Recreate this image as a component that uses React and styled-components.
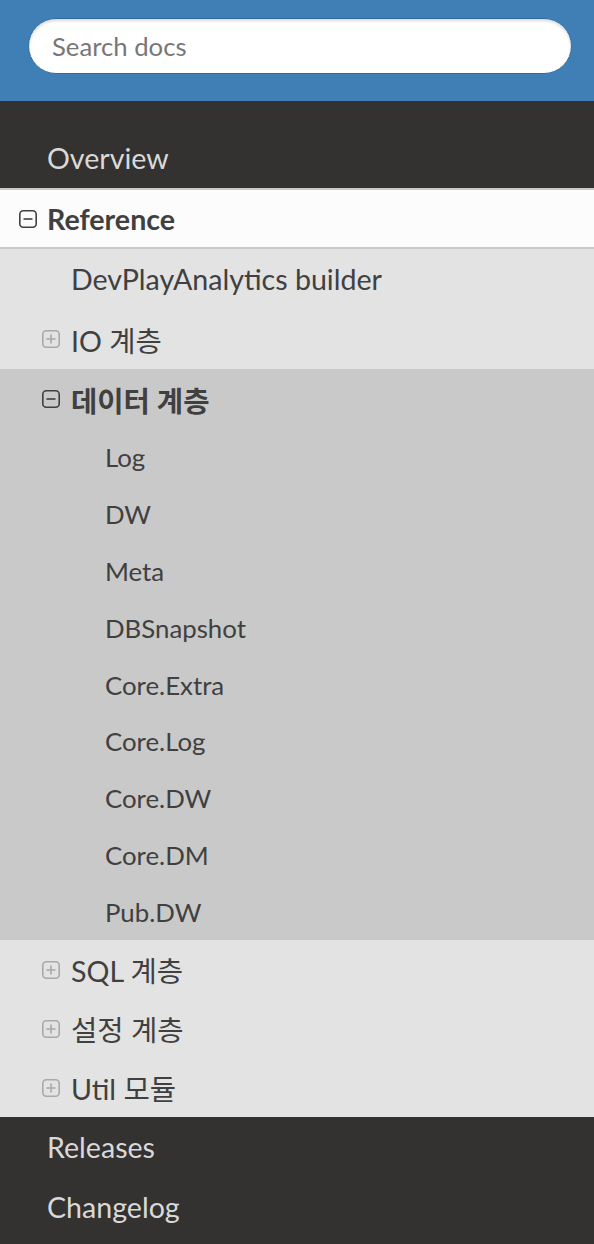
import React from 'react';
import styled, { createGlobalStyle } from 'styled-components';

const GlobalStyle = createGlobalStyle`
    body {
        margin: 0;
        font-family: Lato, "Noto Sans CJK KR", "Noto Sans", sans-serif;
        background: #343131;
    }
`

const Sidebar = styled.nav`
    width: 594px;
    min-height: 1244px;
    background: #343131;
`

const SearchArea = styled.div`
    background: #407eb6;
    padding: 18px 22px 27px 28px;
`

const SearchInput = styled.input`
    display: block;
    box-sizing: border-box;
    width: 100%;
    height: 56px;
    border-radius: 28px;
    border: 1px solid #2f6c9f;
    background: #fff;
    box-shadow: inset 0 2px 3px rgba(0, 0, 0, 0.15);
    padding: 0 23px;
    font-family: inherit;
    font-size: 25.7px;
    color: #404040;
    outline: none;
    &::placeholder {
        color: #777;
    }
`

const Menu = styled.div`
    padding-top: 27px;
`

const DarkLink = styled.a`
    display: block;
    height: 60px;
    line-height: 60px;
    padding-left: 47px;
    font-size: 28.6px;
    color: #d9d9d9;
    text-decoration: none;
`

const CurrentTop = styled.div`
    background: #fcfcfc;
    border-top: 2px solid #c9c9c9;
    border-bottom: 2px solid #c9c9c9;
`

const Row = styled.a`
    display: flex;
    align-items: center;
    gap: ${p => p.$gap || 11}px;
    height: ${p => p.$height || 60}px;
    padding-left: ${p => p.$indent}px;
    font-size: ${p => p.$size || 28.6}px;
    font-weight: ${p => (p.$bold ? 700 : 400)};
    color: #404040;
    text-decoration: none;
`

const Group = styled.div`
    background: ${p => p.$bg};
`

const Toggle = ({ open }) => {
    const c = open ? '#404040' : '#a9a9a9';
    return (
        <svg width="18" height="18" viewBox="0 0 18 18">
            <rect x="0.8" y="0.8" width="16.4" height="16.4" rx="3.5" fill="none" stroke={c} strokeWidth="1.6" />
            <line x1="4.5" y1="9" x2="13.5" y2="9" stroke={c} strokeWidth="1.6" />
            {!open && <line x1="9" y1="4.5" x2="9" y2="13.5" stroke={c} strokeWidth="1.6" />}
        </svg>
    );
}

const dataPages = ['Log', 'DW', 'Meta', 'DBSnapshot', 'Core.Extra', 'Core.Log', 'Core.DW', 'Core.DM', 'Pub.DW'];

export default function App() {
    return (
        <Sidebar>
            <GlobalStyle />
            <SearchArea>
                <SearchInput placeholder="Search docs" />
            </SearchArea>
            <Menu>
                <DarkLink href="#">Overview</DarkLink>
                <CurrentTop>
                    <Row $indent={19} $gap={10} $height={57} $bold>
                        <Toggle open />
                        Reference
                    </Row>
                </CurrentTop>
                <Group $bg="#e3e3e3">
                    <Row $indent={71}>DevPlayAnalytics builder</Row>
                    <Row $indent={42}>
                        <Toggle />
                        IO 계층
                    </Row>
                    <Group $bg="#c9c9c9">
                        <Row $indent={42} $bold>
                            <Toggle open />
                            데이터 계층
                        </Row>
                        {dataPages.map(name => (
                            <Row key={name} $indent={105} $height={56.8} $size={25.8}>{name}</Row>
                        ))}
                    </Group>
                    <Row $indent={42} $height={59}>
                        <Toggle />
                        SQL 계층
                    </Row>
                    <Row $indent={42} $height={59}>
                        <Toggle />
                        설정 계층
                    </Row>
                    <Row $indent={42} $height={59}>
                        <Toggle />
                        Util 모듈
                    </Row>
                </Group>
                <DarkLink href="#">Releases</DarkLink>
                <DarkLink href="#">Changelog</DarkLink>
            </Menu>
        </Sidebar>
    );
}
